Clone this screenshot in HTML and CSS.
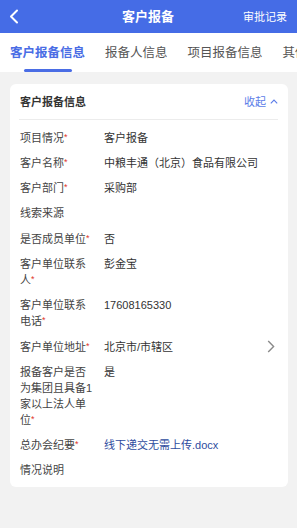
FILE: index.html
```html
<!DOCTYPE html>
<html lang="zh">
<head>
<meta charset="utf-8">
<link rel="stylesheet" href="styles.css">
</head>
<body>
<header class="nav">
  <div class="nav-left">
    <svg class="back" width="10" height="15" viewBox="0 0 10 15"><path d="M8 1.5 L2 7.5 L8 13.5" fill="none" stroke="#fff" stroke-width="2" stroke-linecap="round" stroke-linejoin="round"/></svg>
  </div>
  <div class="nav-title">客户报备</div>
  <div class="nav-right">审批记录</div>
</header>
<nav class="tabs">
  <div class="tab active"><span class="tab-text">客户报备信息</span><span class="tab-bar"></span></div>
  <div class="tab"><span class="tab-text">报备人信息</span></div>
  <div class="tab"><span class="tab-text">项目报备信息</span></div>
  <div class="tab"><span class="tab-text">其他信息</span></div>
</nav>
<main class="page">
  <section class="card">
    <div class="card-head">
      <span class="card-title">客户报备信息</span>
      <span class="collapse">收起<svg class="up" width="8" height="5" viewBox="0 0 8 5"><path d="M0.8 4.3 L4 1 L7.2 4.3" fill="none" stroke="#5b7ce8" stroke-width="1.1"/></svg></span>
    </div>
    <div class="rows">
      <div class="row"><div class="label req">项目情况</div><div class="value">客户报备</div></div>
      <div class="row"><div class="label req">客户名称</div><div class="value">中粮丰通（北京）食品有限公司</div></div>
      <div class="row"><div class="label req">客户部门</div><div class="value">采购部</div></div>
      <div class="row"><div class="label">线索来源</div><div class="value"></div></div>
      <div class="row"><div class="label req">是否成员单位</div><div class="value">否</div></div>
      <div class="row"><div class="label req">客户单位联系人</div><div class="value">彭金宝</div></div>
      <div class="row"><div class="label req">客户单位联系电话</div><div class="value">17608165330</div></div>
      <div class="row"><div class="label req">客户单位地址</div><div class="value">北京市/市辖区</div>
        <svg class="arrow" width="8" height="13" viewBox="0 0 8 13"><path d="M1.2 1 L6.6 6.5 L1.2 12" fill="none" stroke="#8a8a8a" stroke-width="1.4"/></svg>
      </div>
      <div class="row"><div class="label req">报备客户是否为集团且具备1家以上法人单位</div><div class="value">是</div></div>
      <div class="row"><div class="label req">总办会纪要</div><div class="value link">线下递交无需上传.docx</div></div>
      <div class="row"><div class="label">情况说明</div><div class="value"></div></div>
    </div>
  </section>
</main>
</body>
</html>
```

FILE: styles.css
```css
* { box-sizing: border-box; }
html, body {
  margin: 0;
  padding: 0;
  background: #f2f2f2;
  font-family: "Liberation Sans", "Noto Sans CJK SC", sans-serif;
}
body { min-height: 100vh; }

.nav {
  height: 33px;
  background: #456ce6;
  display: grid;
  grid-template-columns: 1fr auto 1fr;
  align-items: center;
  padding: 0 10px 0 9px;
  color: #fff;
}
.nav-left { display: flex; align-items: center; }
.back { display: block; }
.nav-title {
  font-size: 13px;
  font-weight: bold;
  line-height: 16px;
}
.nav-right {
  justify-self: end;
  font-size: 11px;
  line-height: 16px;
}

.tabs {
  height: 39px;
  background: #fff;
  display: flex;
  white-space: nowrap;
  overflow: hidden;
}
.tab {
  flex-shrink: 0;
  padding: 12px 10px 0;
  display: flex;
  flex-direction: column;
  align-items: center;
  font-size: 12.5px;
  line-height: 16px;
  color: #555;
}
.tab.active { color: #4a6de5; font-weight: bold; }
.tab-bar {
  margin-top: auto;
  width: 48px;
  height: 3px;
  border-radius: 2px;
  background: #4a6de5;
}

.page { padding: 12px 9px 20px 10px; }
.card {
  background: #fff;
  border-radius: 6px;
  padding: 0 10px 4px 9px;
}
.card-head {
  height: 36px;
  display: flex;
  align-items: center;
  justify-content: space-between;
  border-bottom: 1px solid #ececec;
  padding-left: 1px;
}
.card-title {
  font-size: 11px;
  font-weight: bold;
  color: #333;
  line-height: 16px;
}
.collapse {
  display: flex;
  align-items: center;
  gap: 4px;
  font-size: 11px;
  line-height: 16px;
  color: #5b7ce8;
}
.up { display: block; }

.rows { padding-top: 5px; }
.row {
  display: flex;
  align-items: flex-start;
  padding: 4.65px 0 4.65px 1px;
  font-size: 11px;
  line-height: 16px;
}
.label {
  width: 74px;
  flex-shrink: 0;
  margin-right: 10px;
  color: #444;
}
.label.req::after {
  content: "*";
  color: #e0362c;
  font-size: 9px;
  line-height: 1;
  vertical-align: 2px;
}
.value {
  flex: 1;
  color: #333;
}
.value.link { color: #2e4c9e; }
.arrow {
  display: block;
  margin: 1.5px 3px 0 0;
}
```
